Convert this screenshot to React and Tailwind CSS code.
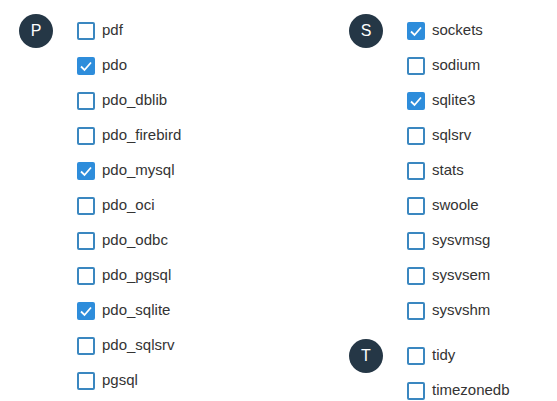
import React from "react";

const left = [
  {
    letter: "P",
    items: [
      ["pdf", false],
      ["pdo", true],
      ["pdo_dblib", false],
      ["pdo_firebird", false],
      ["pdo_mysql", true],
      ["pdo_oci", false],
      ["pdo_odbc", false],
      ["pdo_pgsql", false],
      ["pdo_sqlite", true],
      ["pdo_sqlsrv", false],
      ["pgsql", false],
    ],
  },
];

const right = [
  {
    letter: "S",
    items: [
      ["sockets", true],
      ["sodium", false],
      ["sqlite3", true],
      ["sqlsrv", false],
      ["stats", false],
      ["swoole", false],
      ["sysvmsg", false],
      ["sysvsem", false],
      ["sysvshm", false],
    ],
  },
  {
    letter: "T",
    items: [
      ["tidy", false],
      ["timezonedb", false],
    ],
  },
];

function Check({ label, checked }) {
  return (
    <label className="flex h-[35px] items-center">
      <span
        className={`flex h-[18px] w-[18px] items-center justify-center rounded-[2px] border-2 ${
          checked ? "border-[#2e8ddb] bg-[#2e8ddb]" : "border-[#3a87c0] bg-white"
        }`}
      >
        {checked && (
          <svg viewBox="0 0 14 14" className="h-[14px] w-[14px]">
            <path d="M2 7.5 L5.5 11 L12 3.5" fill="none" stroke="white" strokeWidth="1.8" />
          </svg>
        )}
      </span>
      <span className="ml-[7px] text-[15px] text-[#333]">{label}</span>
    </label>
  );
}

function Group({ letter, items }) {
  return (
    <div className="flex [&+&]:mt-[10px]">
      <div className="w-[58px] pt-px">
        <div className="flex h-[34px] w-[34px] items-center justify-center rounded-full bg-[#253746] text-[16px] text-white">
          {letter}
        </div>
      </div>
      <div className="flex flex-col">
        {items.map(([label, checked]) => (
          <Check key={label} label={label} checked={checked} />
        ))}
      </div>
    </div>
  );
}

export default function App() {
  return (
    <div
      className="flex h-[401px] w-[557px] overflow-hidden bg-white pl-[19px] pt-[13px]"
      style={{ fontFamily: '"Liberation Sans", Arial, sans-serif' }}
    >
      <div className="w-[330px]">
        {left.map((g) => (
          <Group key={g.letter} {...g} />
        ))}
      </div>
      <div>
        {right.map((g) => (
          <Group key={g.letter} {...g} />
        ))}
      </div>
    </div>
  );
}
